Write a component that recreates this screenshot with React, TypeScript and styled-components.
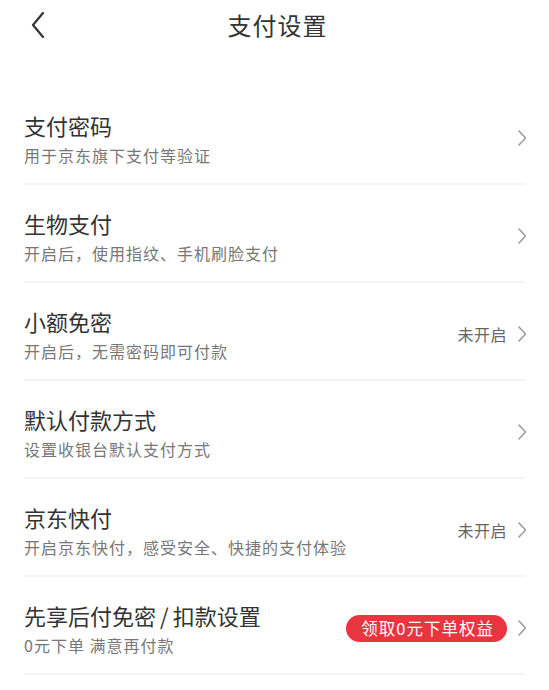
import React from "react";
import styled, { createGlobalStyle } from "styled-components";

const GlobalStyle = createGlobalStyle`
  html, body {
    margin: 0;
    padding: 0;
    background: #ffffff;
  }
  body {
    font-family: "Noto Sans CJK SC", "Noto Sans", sans-serif;
    -webkit-font-smoothing: antialiased;
  }
`;

interface SettingItem {
  title: string;
  desc: string;
  status?: string;
  badge?: string;
}

const items: SettingItem[] = [
  { title: "支付密码", desc: "用于京东旗下支付等验证" },
  { title: "生物支付", desc: "开启后，使用指纹、手机刷脸支付" },
  { title: "小额免密", desc: "开启后，无需密码即可付款", status: "未开启" },
  { title: "默认付款方式", desc: "设置收银台默认支付方式" },
  { title: "京东快付", desc: "开启京东快付，感受安全、快捷的支付体验", status: "未开启" },
  { title: "先享后付免密/扣款设置", desc: "0元下单 满意再付款", badge: "领取0元下单权益" },
];

const Page = styled.div`
  width: 549px;
  min-height: 690px;
  background: #fff;
`;

const Header = styled.header`
  position: relative;
  height: 50px;
  display: flex;
  align-items: center;
  justify-content: center;
  margin-bottom: 37px;
`;

const BackButton = styled.button`
  position: absolute;
  left: 26px;
  top: 9px;
  width: 24px;
  height: 32px;
  padding: 0;
  border: none;
  background: none;
  display: flex;
  align-items: center;
  justify-content: center;
`;

const Title = styled.h1`
  margin: 0 0 0 6px;
  font-size: 24px;
  font-weight: 400;
  color: #333;
  letter-spacing: 1px;
  line-height: 50px;
`;

const List = styled.ul`
  list-style: none;
  margin: 0;
  padding: 0;
`;

const Row = styled.li`
  display: flex;
  align-items: center;
  padding: 23px 22px 19px 24px;
  position: relative;

  &::after {
    content: "";
    position: absolute;
    left: 24px;
    right: 24px;
    bottom: 0;
    height: 2px;
    background: #f4f4f4;
  }
`;

const Texts = styled.div`
  flex: 1;
  display: flex;
  flex-direction: column;
  min-width: 0;
`;

const ItemTitle = styled.div`
  font-size: 22px;
  line-height: 30px;
  color: #333;
`;

const Slash = styled.span`
  margin: 0 4px;
`;

const ItemDesc = styled.div`
  margin-top: 4px;
  font-size: 16px;
  line-height: 22px;
  letter-spacing: 1px;
  color: #777;
`;

const Extra = styled.div`
  display: flex;
  align-items: center;
  gap: 10px;
`;

const Status = styled.span`
  font-size: 16px;
  color: #666;
  letter-spacing: 0.5px;
`;

const Badge = styled.span`
  display: inline-flex;
  align-items: center;
  height: 27px;
  padding: 0 13px 0 15px;
  border-radius: 14px;
  background: #ea3440;
  color: #fff;
  font-size: 16.5px;
  letter-spacing: 1px;
`;

const Chevron = () => (
  <svg width="10" height="18" viewBox="0 0 10 18" fill="none">
    <path d="M2 2l6.5 7L2 16" stroke="#9a9a9a" strokeWidth="1.5" strokeLinecap="round" strokeLinejoin="round" />
  </svg>
);

const BackIcon = () => (
  <svg width="14" height="28" viewBox="0 0 14 28" fill="none">
    <path d="M12 2L2 14l10 12" stroke="#333" strokeWidth="2.2" strokeLinecap="round" strokeLinejoin="round" />
  </svg>
);

const renderTitle = (title: string) => {
  const parts = title.split("/");
  if (parts.length < 2) return title;
  return (
    <>
      {parts[0]}
      <Slash>/</Slash>
      {parts[1]}
    </>
  );
};

const App = () => (
  <Page>
    <GlobalStyle />
    <Header>
      <BackButton aria-label="返回">
        <BackIcon />
      </BackButton>
      <Title>支付设置</Title>
    </Header>
    <List>
      {items.map((item) => (
        <Row key={item.title}>
          <Texts>
            <ItemTitle>{renderTitle(item.title)}</ItemTitle>
            <ItemDesc>{item.desc}</ItemDesc>
          </Texts>
          <Extra>
            {item.status && <Status>{item.status}</Status>}
            {item.badge && <Badge>{item.badge}</Badge>}
            <Chevron />
          </Extra>
        </Row>
      ))}
    </List>
  </Page>
);

export default App;
